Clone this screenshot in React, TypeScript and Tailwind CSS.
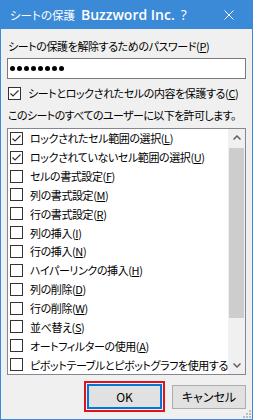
import type { ReactNode } from "react";

type Item = { text: string; key: string; checked?: boolean };

const items: Item[] = [
  { text: "ロックされたセル範囲の選択", key: "L", checked: true },
  { text: "ロックされていないセル範囲の選択", key: "U", checked: true },
  { text: "セルの書式設定", key: "F" },
  { text: "列の書式設定", key: "M" },
  { text: "行の書式設定", key: "R" },
  { text: "列の挿入", key: "I" },
  { text: "行の挿入", key: "N" },
  { text: "ハイパーリンクの挿入", key: "H" },
  { text: "列の削除", key: "D" },
  { text: "行の削除", key: "W" },
  { text: "並べ替え", key: "S" },
  { text: "オートフィルターの使用", key: "A" },
  { text: "ピボットテーブルとピボットグラフを使用する", key: "" },
];

function Accel({ k }: { k: string }) {
  if (!k) return null;
  return (
    <>
      (<span className="underline underline-offset-1">{k}</span>)
    </>
  );
}

function Checkbox({ checked }: { checked?: boolean }) {
  return (
    <span className="flex h-[13px] w-[13px] shrink-0 items-center justify-center border border-[#333333] bg-white">
      {checked && (
        <svg width="11" height="11" viewBox="0 0 11 11">
          <path d="M1.5 5.5 L4 8 L9.5 2.5" fill="none" stroke="#333333" strokeWidth="1.2" />
        </svg>
      )}
    </span>
  );
}

function Row({ children, checked }: { children: ReactNode; checked?: boolean }) {
  return (
    <div className="flex h-[18.85px] items-center gap-[7px] pl-[1px]">
      <Checkbox checked={checked} />
      <span className="whitespace-nowrap">{children}</span>
    </div>
  );
}

export default function App() {
  return (
    <div className="relative flex h-[420px] w-[253px] flex-col overflow-hidden border border-[#3b8ad8] bg-[#f0f0f0] font-['Noto_Sans_CJK_JP',sans-serif] text-[11px] leading-[16px] tracking-[-0.4px] text-black [font-feature-settings:'palt']">
      {/* Title bar */}
      <div className="flex h-[28px] shrink-0 items-center bg-[#3b8ad8] tracking-normal text-white">
        <span className="ml-[9px] text-[11.5px]">シートの保護</span>
        <span className="ml-[6px] font-['Open_Sans',sans-serif] text-[14px] font-semibold">Buzzword Inc.</span>
        <span className="ml-[6px] font-['Open_Sans',sans-serif] text-[14px]">?</span>
        <svg className="ml-auto mr-[18px]" width="10" height="10" viewBox="0 0 10 10">
          <path d="M0.5 0.5 L9.5 9.5 M9.5 0.5 L0.5 9.5" stroke="white" strokeWidth="1" />
        </svg>
      </div>

      <div className="flex flex-1 flex-col px-[6px]">
        <div className="mt-[9px] pl-[1px]">
          シートの保護を解除するためのパスワード<Accel k="P" />
        </div>
        <div className="mt-[4px] flex h-[21px] items-center gap-[2px] border border-[#7a7a7a] bg-white pl-[2px]">
          {Array.from({ length: 8 }).map((_, i) => (
            <span key={i} className="h-[5px] w-[5px] rounded-full bg-black" />
          ))}
        </div>
        <div className="mt-[6px] flex items-center gap-[7px] pl-[1px]">
          <Checkbox checked />
          <span className="whitespace-nowrap">
            シートとロックされたセルの内容を保護する<Accel k="C" />
          </span>
        </div>
        <div className="mt-[6px] whitespace-nowrap pl-[1px] tracking-[-0.6px]">このシートのすべてのユーザーに以下を許可します。</div>

        {/* List */}
        <div className="mt-[5px] flex h-[247px] shrink-0 border border-[#828790] bg-white">
          <div className="flex-1 overflow-hidden pl-[1px]">
            {items.map((it) => (
              <Row key={it.text} checked={it.checked}>
                {it.text}
                <Accel k={it.key} />
              </Row>
            ))}
          </div>
          <div className="flex w-[17px] shrink-0 flex-col bg-[#f0f0f0]">
            <div className="flex h-[17px] items-center justify-center">
              <svg width="8" height="5" viewBox="0 0 8 5">
                <path d="M0.5 4.5 L4 1 L7.5 4.5" fill="none" stroke="#606060" strokeWidth="1.5" />
              </svg>
            </div>
            <div className="mx-[1px] mt-[2px] h-[170px] bg-[#cdcdcd]" />
            <div className="mt-auto flex h-[17px] items-center justify-center">
              <svg width="8" height="5" viewBox="0 0 8 5">
                <path d="M0.5 0.5 L4 4 L7.5 0.5" fill="none" stroke="#606060" strokeWidth="1.5" />
              </svg>
            </div>
          </div>
        </div>

        {/* Buttons */}
        <div className="mt-[6px] flex items-start justify-end tracking-normal">
          <div className="border-2 border-[#e0141e] bg-[#f0f0f0] p-[1px]">
            <button className="flex h-[25px] w-[75px] items-center justify-center border-2 border-[#0078d7] bg-[#e1e1e1] text-[12px]">
              OK
            </button>
          </div>
          <button className="ml-[7px] mt-[4px] flex h-[24px] w-[74px] items-center justify-center border border-[#adadad] bg-[#e1e1e1] text-[12px]">
            キャンセル
          </button>
        </div>
      </div>

      {/* Resize grip */}
      <svg className="absolute bottom-[1px] right-[1px]" width="10" height="10" viewBox="0 0 10 10">
        {[
          [8, 2],
          [8, 5],
          [5, 5],
          [8, 8],
          [5, 8],
          [2, 8],
        ].map(([x, y]) => (
          <rect key={`${x}-${y}`} x={x} y={y} width="2" height="2" fill="#bcbcbc" />
        ))}
      </svg>
    </div>
  );
}
